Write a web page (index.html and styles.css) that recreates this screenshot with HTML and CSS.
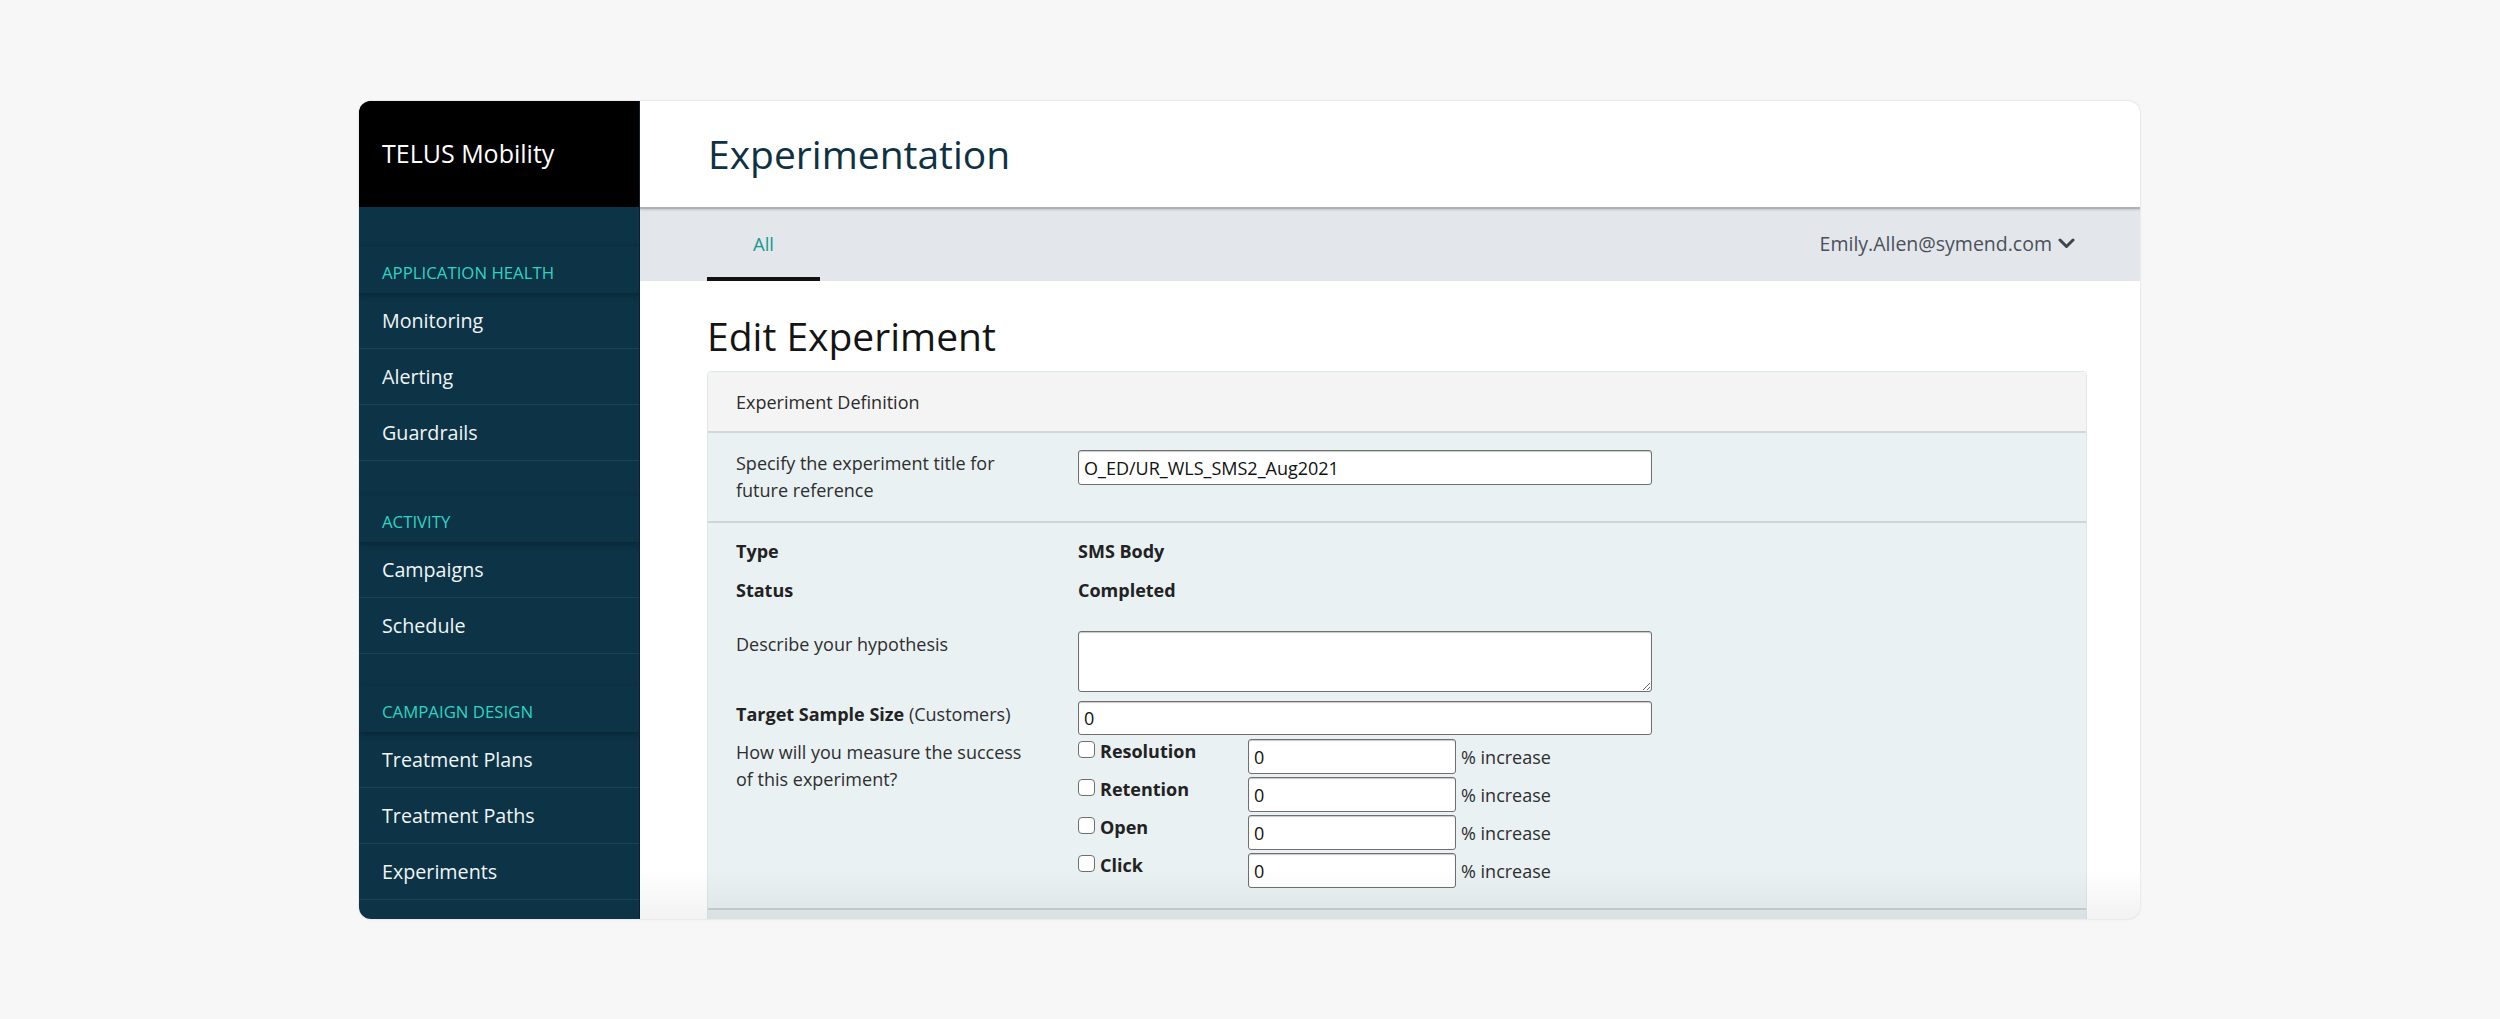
FILE: index.html
```html
<!DOCTYPE html>
<html lang="en">
<head>
<meta charset="utf-8">
<title>Experimentation</title>
<link rel="stylesheet" href="styles.css">
</head>
<body>
<div class="page">
  <div class="card">
    <aside class="sidebar">
      <div class="brand">TELUS Mobility</div>
      <nav class="nav">
        <div class="nav-section">
          <div class="section-title">APPLICATION HEALTH</div>
          <div class="nav-item">Monitoring</div>
          <div class="nav-item">Alerting</div>
          <div class="nav-item">Guardrails</div>
        </div>
        <div class="nav-section">
          <div class="section-title">ACTIVITY</div>
          <div class="nav-item">Campaigns</div>
          <div class="nav-item">Schedule</div>
        </div>
        <div class="nav-section">
          <div class="section-title">CAMPAIGN DESIGN</div>
          <div class="nav-item">Treatment Plans</div>
          <div class="nav-item">Treatment Paths</div>
          <div class="nav-item">Experiments</div>
          <div class="nav-item"></div>
        </div>
      </nav>
    </aside>
    <main class="main">
      <header class="topbar">Experimentation</header>
      <div class="tabbar">
        <div class="tab active">All</div>
        <div class="user">Emily.Allen@symend.com
          <svg class="chev" width="17" height="11" viewBox="0 0 17 11"><polyline points="2,2 8.5,8.5 15,2" fill="none" stroke="#3f454b" stroke-width="3" stroke-linecap="round" stroke-linejoin="round"/></svg>
        </div>
      </div>
      <div class="content">
        <h1 class="page-title">Edit Experiment</h1>
        <section class="panel">
          <div class="panel-head">Experiment Definition</div>
          <div class="panel-body">
            <div class="block block-title">
              <div class="row">
                <div class="label">Specify the experiment title for<br>future reference</div>
                <div class="value"><input class="text-input wide" type="text" value="O_ED/UR_WLS_SMS2_Aug2021"></div>
              </div>
            </div>
            <div class="block block-details">
              <div class="row row-type">
                <div class="label strong">Type</div>
                <div class="value strong">SMS Body</div>
              </div>
              <div class="row row-status">
                <div class="label strong">Status</div>
                <div class="value strong">Completed</div>
              </div>
              <div class="row row-hyp">
                <div class="label">Describe your hypothesis</div>
                <div class="value"><textarea class="text-area"></textarea></div>
              </div>
              <div class="row row-target">
                <div class="label"><span class="strong">Target Sample Size</span> (Customers)</div>
                <div class="value"><input class="text-input wide short" type="text" value="0"></div>
              </div>
              <div class="row row-measure">
                <div class="label">How will you measure the success<br>of this experiment?</div>
                <div class="value metrics">
                  <div class="metric">
                    <label class="check"><span class="box"></span><span class="strong">Resolution</span></label>
                    <input class="text-input small" type="text" value="0">
                    <span class="unit">% increase</span>
                  </div>
                  <div class="metric">
                    <label class="check"><span class="box"></span><span class="strong">Retention</span></label>
                    <input class="text-input small" type="text" value="0">
                    <span class="unit">% increase</span>
                  </div>
                  <div class="metric">
                    <label class="check"><span class="box"></span><span class="strong">Open</span></label>
                    <input class="text-input small" type="text" value="0">
                    <span class="unit">% increase</span>
                  </div>
                  <div class="metric">
                    <label class="check"><span class="box"></span><span class="strong">Click</span></label>
                    <input class="text-input small" type="text" value="0">
                    <span class="unit">% increase</span>
                  </div>
                </div>
              </div>
            </div>
          </div>
          <div class="panel-next"></div>
        </section>
      </div>
      <div class="fade"></div>
    </main>
  </div>
</div>
</body>
</html>
```

FILE: styles.css
```css
* { box-sizing: border-box; }

html, body {
  margin: 0;
  padding: 0;
  background: #f7f7f7;
  font-family: "Open Sans", "Noto Sans", "Liberation Sans", sans-serif;
}

.page {
  padding: 101px 0 0 359px;
  height: 1019px;
}

.card {
  width: 1781px;
  height: 818px;
  display: flex;
  background: #ffffff;
  border-radius: 12px;
  overflow: hidden;
  box-shadow: 0 0 2px rgba(0, 0, 0, 0.18);
}

/* Sidebar */
.sidebar {
  width: 281px;
  flex: none;
  background: #0c3346;
  border-right: 1px solid #062331;
  display: flex;
  flex-direction: column;
  overflow: hidden;
}

.brand {
  flex: none;
  height: 106px;
  background: #000000;
  color: #ffffff;
  font-size: 25px;
  display: flex;
  align-items: center;
  padding-left: 23px;
  padding-bottom: 2px;
}

.nav {
  flex: none;
  padding-top: 4px;
}

.nav-section {
  margin-top: 36px;
}

.nav-section + .nav-section {
  margin-top: 35px;
}

.nav-section:last-child {
  margin-top: 32px;
}

.section-title {
  position: relative;
  z-index: 1;
  height: 46px;
  padding: 14px 23px 8px;
  line-height: 24px;
  font-size: 16.8px;
  color: #2fd3c2;
  background: #0c3346;
  box-shadow: 0 2px 6px rgba(0, 0, 0, 0.28);
}

.nav-item {
  height: 56px;
  display: flex;
  align-items: center;
  padding-left: 23px;
  font-size: 19.7px;
  color: #f1f5f6;
  border-bottom: 1px solid #1a4154;
}

/* Main */
.main {
  position: relative;
  flex: 1;
  display: flex;
  flex-direction: column;
  min-width: 0;
  overflow: hidden;
}

.topbar {
  height: 108px;
  flex: none;
  display: flex;
  align-items: center;
  padding-left: 68px;
  padding-bottom: 2px;
  font-size: 39px;
  color: #0e3243;
  border-bottom: 2px solid #aeb0b2;
  box-shadow: 0 1px 2px rgba(0, 0, 0, 0.15);
  position: relative;
  z-index: 1;
}

.tabbar {
  height: 72px;
  flex: none;
  background: #e3e7ec;
  display: flex;
  justify-content: space-between;
  align-items: stretch;
  padding: 0 65px 0 67px;
}

.tab {
  width: 113px;
  display: flex;
  align-items: center;
  justify-content: center;
  font-size: 18.5px;
  color: #18998c;
  border-bottom: 4px solid transparent;
}

.tab.active {
  border-bottom-color: #111111;
}

.user {
  display: flex;
  align-items: center;
  gap: 6px;
  font-size: 19.5px;
  color: #4b5158;
  padding-bottom: 4px;
}

.chev {
  display: block;
  margin-top: 1px;
}

.content {
  flex: none;
  padding: 0 53px 0 67px;
}

.page-title {
  margin: 29px 0 9px;
  font-size: 39px;
  line-height: 52px;
  font-weight: 400;
  color: #141414;
}

.panel {
  border: 1px solid #dde6e8;
  border-radius: 4px;
  overflow: hidden;
}

.panel-head {
  height: 61px;
  display: flex;
  align-items: center;
  padding-left: 28px;
  font-size: 18px;
  color: #2b2b2b;
  background: #f4f4f4;
  border-bottom: 2px solid #d3d7d9;
}

.panel-body {
  background: #e9f1f3;
}

.block {
  padding: 0 28px;
}

.block-title {
  padding-top: 17px;
  padding-bottom: 17px;
  border-bottom: 2px solid #cdd5d8;
}

.block-details {
  padding-top: 15px;
  padding-bottom: 20px;
  border-bottom: 2px solid #c9d1d4;
}

.row {
  display: grid;
  grid-template-columns: 342px 1fr;
  align-items: start;
  font-size: 18px;
  line-height: 27px;
  color: #2e2e2e;
}

.row-status { margin-top: 12px; }
.row-hyp { margin-top: 27px; }
.row-target { margin-top: 9px; }
.row-measure { margin-top: 4px; }

.strong {
  font-weight: 700;
  color: #222222;
}

.label {
  white-space: nowrap;
}

.text-input {
  display: block;
  height: 35px;
  padding: 0 5px;
  font-family: inherit;
  font-size: 18px;
  color: #111111;
  background: #ffffff;
  border: 1px solid #6f6f6f;
  border-radius: 3px;
  box-shadow: inset 0 1px 1px rgba(0, 0, 0, 0.22);
  outline: none;
}

.text-input.wide {
  width: 574px;
}

.text-input.short {
  height: 34px;
}

.text-area {
  display: block;
  width: 574px;
  height: 61px;
  font-family: inherit;
  font-size: 18px;
  background: #ffffff;
  border: 1px solid #6f6f6f;
  border-radius: 3px;
  box-shadow: inset 0 1px 1px rgba(0, 0, 0, 0.22);
  resize: both;
}

.metrics {
  display: flex;
  flex-direction: column;
  gap: 3px;
}

.metric {
  display: flex;
  align-items: center;
  height: 35px;
}

.check {
  width: 170px;
  align-self: flex-start;
  display: flex;
  align-items: flex-start;
  gap: 5px;
  line-height: 27px;
  margin-top: -1px;
}

.box {
  width: 17px;
  height: 17px;
  margin-top: 3px;
  flex: none;
  background: #ffffff;
  border: 1px solid #6f6f6f;
  border-radius: 4px;
}

.text-input.small {
  width: 208px;
  height: 35px;
}

.unit {
  margin-left: 5px;
  padding-top: 2px;
}

.panel-next {
  height: 48px;
  background: #e6edef;
}

.fade {
  position: absolute;
  left: 0;
  right: 0;
  bottom: 0;
  height: 50px;
  background: linear-gradient(to bottom, rgba(0, 0, 0, 0), rgba(0, 0, 0, 0.05));
  pointer-events: none;
}
```
